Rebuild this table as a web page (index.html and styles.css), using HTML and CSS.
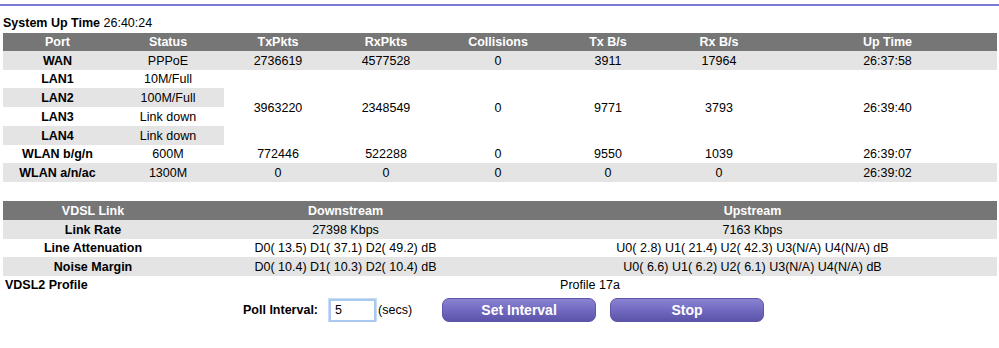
FILE: index.html
```html
<!DOCTYPE html>
<html>
<head>
<meta charset="utf-8">
<title>Statistics</title>
<link rel="stylesheet" href="styles.css">
</head>
<body>
<div class="topline"></div>
<div class="uptime"><b>System Up Time</b> 26:40:24</div>

<table class="stats">
  <colgroup>
    <col style="width:109px"><col style="width:112px"><col style="width:108px"><col style="width:108px">
    <col style="width:116px"><col style="width:104px"><col style="width:118px"><col style="width:219px">
  </colgroup>
  <tr class="head h18"><th>Port</th><th>Status</th><th>TxPkts</th><th>RxPkts</th><th>Collisions</th><th>Tx B/s</th><th>Rx B/s</th><th>Up Time</th></tr>
  <tr class="r19 shade"><td class="lbl">WAN</td><td>PPPoE</td><td>2736619</td><td>4577528</td><td>0</td><td>3911</td><td>17964</td><td>26:37:58</td></tr>
  <tr class="r18"><td class="lbl">LAN1</td><td>10M/Full</td>
    <td rowspan="4">3963220</td><td rowspan="4">2348549</td><td rowspan="4">0</td><td rowspan="4">9771</td><td rowspan="4">3793</td><td rowspan="4">26:39:40</td></tr>
  <tr class="r19"><td class="lbl g">LAN2</td><td class="g">100M/Full</td></tr>
  <tr class="r19"><td class="lbl">LAN3</td><td>Link down</td></tr>
  <tr class="r19"><td class="lbl g">LAN4</td><td class="g">Link down</td></tr>
  <tr class="r18"><td class="lbl">WLAN b/g/n</td><td>600M</td><td>772446</td><td>522288</td><td>0</td><td>9550</td><td>1039</td><td>26:39:07</td></tr>
  <tr class="r19 shade"><td class="lbl">WLAN a/n/ac</td><td>1300M</td><td>0</td><td>0</td><td>0</td><td>0</td><td>0</td><td>26:39:02</td></tr>
</table>

<table class="stats vdsl">
  <colgroup>
    <col style="width:180px"><col style="width:325px"><col style="width:489px">
  </colgroup>
  <tr class="head r19"><th>VDSL Link</th><th>Downstream</th><th>Upstream</th></tr>
  <tr class="r19 shade"><td class="lbl">Link Rate</td><td>27398 Kbps</td><td>7163 Kbps</td></tr>
  <tr class="r18"><td class="lbl">Line Attenuation</td><td>D0( 13.5) D1( 37.1) D2( 49.2) dB</td><td>U0( 2.8) U1( 21.4) U2( 42.3) U3(N/A) U4(N/A) dB</td></tr>
  <tr class="r19 shade"><td class="lbl">Noise Margin</td><td>D0( 10.4) D1( 10.3) D2( 10.4) dB</td><td>U0( 6.6) U1( 6.2) U2( 6.1) U3(N/A) U4(N/A) dB</td></tr>
  <tr class="r18"><td class="lbl left">VDSL2 Profile</td><td colspan="2">Profile 17a</td></tr>
</table>

<div class="poll">
  <label class="poll-label" for="interval">Poll Interval:</label>
  <input id="interval" class="poll-input" type="text" value="5">
  <span class="secs">(secs)</span>
  <button class="btn btn-set">Set Interval</button>
  <button class="btn btn-stop">Stop</button>
</div>
</body>
</html>
```

FILE: styles.css
```css
html, body {
  margin: 0;
  padding: 0;
  background: #ffffff;
}
body {
  font-family: "Liberation Sans", Arial, Helvetica, sans-serif;
  font-size: 12.5px;
  color: #000;
}
.topline {
  margin-top: 4px;
  height: 2px;
  background: #7b78d8;
}
.uptime {
  margin: 10px 0 0 3px;
  line-height: 15px;
  height: 15px;
}
.stats {
  margin: 2px 0 0 3px;
  width: 994px;
  border-collapse: collapse;
  border-spacing: 0;
  table-layout: fixed;
}
.stats th,
.stats td {
  padding: 0;
  text-align: center;
  vertical-align: middle;
  white-space: nowrap;
  line-height: 14px;
}
.head th {
  background: #767676;
  color: #fff;
  font-weight: bold;
}
.h18 { height: 18px; }
.r18 { height: 18px; }
.r19 { height: 19px; }
.shade td { background: #e4e4e4; }
td.g { background: #e4e4e4; }
td.lbl { font-weight: bold; }
td.left { text-align: left; padding-left: 2px; }
.vdsl { margin-top: 19px; }
.poll {
  display: flex;
  align-items: center;
  margin-top: 4px;
  padding-left: 243px;
  height: 24px;
}
.poll-label {
  font-weight: bold;
  margin-right: 11px;
}
.poll-input {
  box-sizing: border-box;
  width: 47px;
  height: 23px;
  margin: 0 2px 0 0;
  padding: 0 0 0 4px;
  border: 2px solid #a9c9f1;
  outline: 1px solid #c9dcf5;
  font-family: "Liberation Sans", Arial, sans-serif;
  font-size: 12.5px;
  background: #fff;
}
.secs { margin-right: 30px; }
.btn {
  box-sizing: border-box;
  width: 154px;
  height: 24px;
  padding: 0;
  border: 1px solid #5d56a8;
  border-radius: 7px;
  background: linear-gradient(#8a83d2, #716ac0 50%, #5c54a9);
  color: #fff;
  font-family: "Liberation Sans", Arial, sans-serif;
  font-size: 14px;
  font-weight: bold;
  cursor: pointer;
}
.btn-set { margin-right: 14px; }
```
